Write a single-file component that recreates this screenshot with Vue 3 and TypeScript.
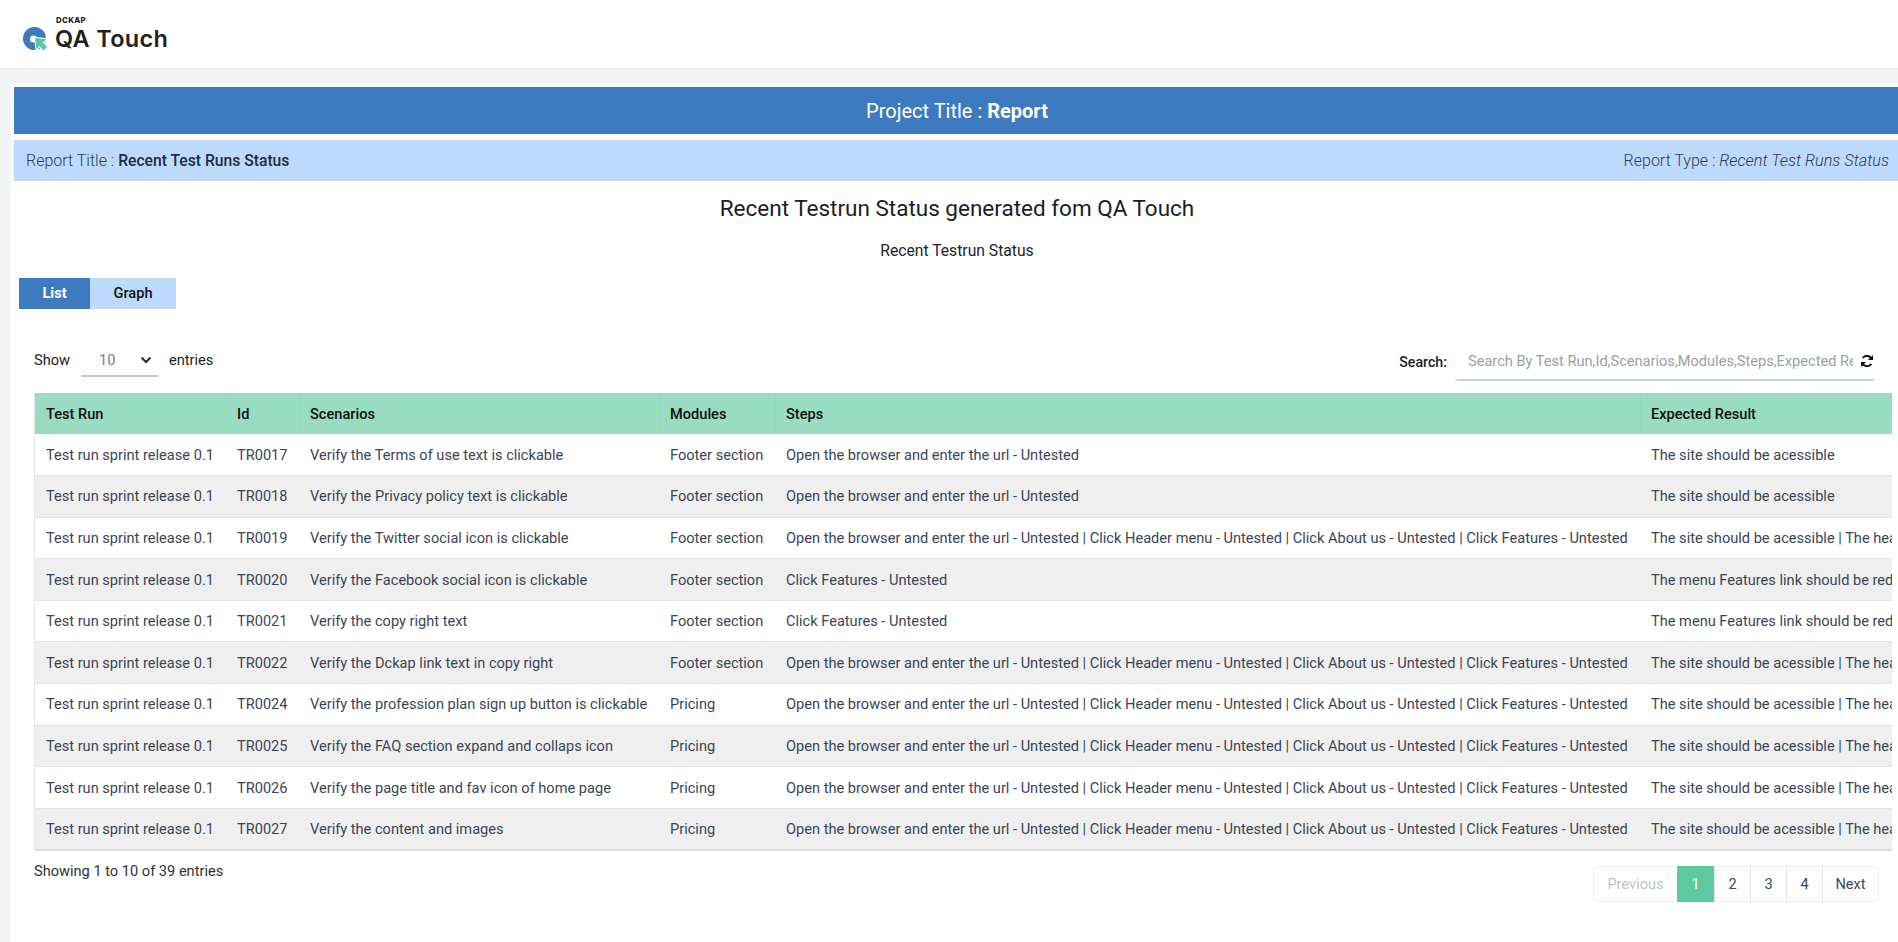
<script setup lang="ts">
interface Row { run: string; id: string; scenario: string; module: string; steps: string; expected: string }
const full = 'Open the browser and enter the url - Untested | Click Header menu - Untested | Click About us - Untested | Click Features - Untested'
const open = 'Open the browser and enter the url - Untested'
const click = 'Click Features - Untested'
const site = 'The site should be acessible'
const siteFull = 'The site should be acessible | The header menu should be displayed'
const menu = 'The menu Features link should be redirected to features page'
const run = 'Test run sprint release 0.1'
const rows: Row[] = [
  { run, id: 'TR0017', scenario: 'Verify the Terms of use text is clickable', module: 'Footer section', steps: open, expected: site },
  { run, id: 'TR0018', scenario: 'Verify the Privacy policy text is clickable', module: 'Footer section', steps: open, expected: site },
  { run, id: 'TR0019', scenario: 'Verify the Twitter social icon is clickable', module: 'Footer section', steps: full, expected: siteFull },
  { run, id: 'TR0020', scenario: 'Verify the Facebook social icon is clickable', module: 'Footer section', steps: click, expected: menu },
  { run, id: 'TR0021', scenario: 'Verify the copy right text', module: 'Footer section', steps: click, expected: menu },
  { run, id: 'TR0022', scenario: 'Verify the Dckap link text in copy right', module: 'Footer section', steps: full, expected: siteFull },
  { run, id: 'TR0024', scenario: 'Verify the profession plan sign up button is clickable', module: 'Pricing', steps: full, expected: siteFull },
  { run, id: 'TR0025', scenario: 'Verify the FAQ section expand and collaps icon', module: 'Pricing', steps: full, expected: siteFull },
  { run, id: 'TR0026', scenario: 'Verify the page title and fav icon of home page', module: 'Pricing', steps: full, expected: siteFull },
  { run, id: 'TR0027', scenario: 'Verify the content and images', module: 'Pricing', steps: full, expected: siteFull },
]
const pages = ['1', '2', '3', '4']
</script>

<template>
  <div class="page">
    <header class="top">
      <div class="logo">
        <svg class="mark" width="26" height="26" viewBox="0 0 26 26">
          <circle cx="12.500" cy="12.500" r="11.500" fill="#3d7ac0" />
          <circle cx="11.500" cy="13" r="3.500" fill="#fff" />
          <path d="M13 12l11.500 1-3.500 3.200 4 4.800-3.500 3.500-4-4.500-3 3.500z" fill="#5ec8a0" stroke="#fff" stroke-width="2" paint-order="stroke" stroke-linejoin="round" />
        </svg>
        <div class="words">
          <span class="dckap">DCKAP</span>
          <span class="qa">QA Touch</span>
        </div>
      </div>
    </header>
    <main class="card">
      <div class="project">Project Title : <b>Report</b></div>
      <div class="meta">
        <span>Report Title : <strong>Recent Test Runs Status</strong></span>
        <span>Report Type : <em>Recent Test Runs Status</em></span>
      </div>
      <h1 class="title">Recent Testrun Status generated fom QA Touch</h1>
      <p class="subtitle">Recent Testrun Status</p>
      <div class="tabs">
        <span class="tab active">List</span>
        <span class="tab">Graph</span>
      </div>
      <div class="panel">
        <div class="tools">
          <div class="show">
            <span>Show</span>
            <span class="select">10
              <svg width="12" height="8" viewBox="0 0 12 8"><path d="M1.500 1.500L6 6l4.500-4.500" fill="none" stroke="#1f2d3d" stroke-width="2" /></svg>
            </span>
            <span>entries</span>
          </div>
          <div class="search">
            <span class="search-label">Search:</span>
            <div class="search-box">
              <span class="placeholder">Search By Test Run,Id,Scenarios,Modules,Steps,Expected Result</span>
              <svg width="14" height="14" viewBox="0 0 14 14">
                <path d="M12 5.500A5.200 5.200 0 0 0 2.800 4M2 8.500A5.200 5.200 0 0 0 11.200 10" fill="none" stroke="#111" stroke-width="2" />
                <path d="M13 1v5H8zM1 13V8h5z" fill="#111" />
              </svg>
            </div>
          </div>
        </div>
        <div class="table-clip">
          <table>
            <colgroup>
              <col class="c1" /><col class="c2" /><col class="c3" /><col class="c4" /><col class="c5" /><col class="c6" />
            </colgroup>
            <thead>
              <tr>
                <th>Test Run</th><th>Id</th><th>Scenarios</th><th>Modules</th><th>Steps</th><th>Expected Result</th>
              </tr>
            </thead>
            <tbody>
              <tr v-for="r in rows" :key="r.id">
                <td>{{ r.run }}</td><td>{{ r.id }}</td><td>{{ r.scenario }}</td><td>{{ r.module }}</td><td>{{ r.steps }}</td><td>{{ r.expected }}</td>
              </tr>
            </tbody>
          </table>
        </div>
        <div class="foot">
          <span class="info">Showing 1 to 10 of 39 entries</span>
          <nav class="pager">
            <span class="pg prev">Previous</span>
            <span v-for="p in pages" :key="p" class="pg" :class="{ current: p === '1' }">{{ p }}</span>
            <span class="pg next">Next</span>
          </nav>
        </div>
      </div>
    </main>
  </div>
</template>

<style>
html, body { margin: 0; overflow: hidden; }
</style>

<style scoped>
.page {
  height: 942px;
  overflow: hidden;
  background: #f3f4f6;
  font-family: Roboto, "Liberation Sans", sans-serif;
  font-size: 14.600px;
  color: #3a4656;
}
.top {
  height: 69px;
  background: #fff;
  border-bottom: 1px solid #e6e7e9;
  box-sizing: border-box;
  padding: 16px 0 0 22px;
}
.logo { display: flex; align-items: flex-end; gap: 8px; }
.mark { margin-bottom: -1px; flex: none; }
.words { display: flex; flex-direction: column; }
.dckap { font: 800 7.800px/8px Inter, sans-serif; color: #222; letter-spacing: .35px; margin-bottom: 3px; }
.qa { font: 600 23.500px/24px Inter, sans-serif; color: #1f1f22; margin-left: -1px; letter-spacing: .3px; }
.card {
  margin: 15px 0 0 11px;
  width: 1889px;
  height: 858px;
  background: #fff;
  padding: 3px 0 0 3px;
  box-sizing: border-box;
}
.project {
  height: 47px;
  line-height: 48px;
  background: #3d7ac0;
  color: #fff;
  font-size: 20px;
  text-align: center;
}
.project b { font-weight: 700; }
.meta {
  margin-top: 6px;
  height: 41px;
  background: #bddafd;
  display: flex;
  justify-content: space-between;
  align-items: center;
  padding: 0 11px 0 12px;
  font-size: 16px;
  font-weight: 300;
  color: #2f3d50;
}
.meta strong { font-size: 15.700px; font-weight: 500; color: #1f2d3d; }
.meta em { font-size: 16.300px; color: #2d3a4a; }
.title {
  margin: 14px 0 0;
  font-size: 22.500px;
  line-height: 26px;
  font-weight: 400;
  color: #1d1d1f;
  text-align: center;
}
.subtitle {
  margin: 21px 0 0;
  text-align: center;
  line-height: 18px;
  font-size: 15.700px;
  color: #212529;
}
.tabs { display: flex; margin: 18px 0 0 5px; }
.tab {
  height: 31px;
  line-height: 31px;
  width: 86px;
  text-align: center;
  background: #bddafd;
  font-weight: 500;
  color: #111;
}
.tab.active { width: 71px; background: #3d7ac0; color: #fff; font-weight: 700; }
.panel { padding: 0 8px 0 20px; }
.tools {
  display: flex;
  justify-content: space-between;
  margin-top: 34px;
  height: 50px;
  padding-right: 17px;
}
.show { display: flex; align-items: flex-start; gap: 11px; color: #222; line-height: 30px; margin-top: 2px; }
.select {
  width: 77px;
  height: 32px;
  border-bottom: 2px solid #bcc9d8;
  display: flex;
  justify-content: space-between;
  align-items: flex-start;
  box-sizing: border-box;
  padding: 0 6px 0 18px;
  color: #75808c;
}
.select svg { flex: none; margin-top: 11px; }
.search { display: flex; gap: 8px; align-items: flex-start; }
.search-label { font-weight: 500; color: #222; line-height: 16px; margin-top: 11px; font-size: 14.200px; }
.search-box {
  width: 420px;
  height: 38px;
  border-bottom: 2px solid #c3d0dd;
  border-radius: 0 0 4px 4px;
  box-sizing: border-box;
  display: flex;
  align-items: center;
  justify-content: space-between;
  padding: 0 1px 0 13px;
}
.placeholder {
  width: 385px;
  overflow: hidden;
  white-space: nowrap;
  color: #9aa0a6;
}
.table-clip { overflow: hidden; border-left: 1px solid #e8e8e8; }
table { border-collapse: collapse; table-layout: fixed; width: 2400px; }
.c1 { width: 191px; } .c2 { width: 73px; } .c3 { width: 360px; } .c4 { width: 116px; } .c5 { width: 865px; } .c6 { width: 795px; }
th {
  height: 41px;
  box-sizing: border-box;
  background: #9adcc2;
  text-align: left;
  padding: 0 11px 0 10.500px;
  font-weight: 500;
  color: #111;
  border-left: 1px solid #94d8bd;
  white-space: nowrap;
}
th:first-child { border-left: 0; padding-left: 11px; }
td {
  height: 41.600px;
  padding: 0 11px;
  box-sizing: border-box;
  white-space: nowrap;
  overflow: hidden;
  color: #3a4656;
  border-bottom: 1px solid #e4e4e4;
}
tbody tr:nth-child(even) td { background: #efefef; }
tbody tr:last-child td { border-bottom: 2px solid #dcdcdc; }
.foot { display: flex; justify-content: space-between; align-items: flex-start; padding: 10px 13px 0 0; }
.info { color: #2f3337; line-height: 20px; }
.pager {
  display: flex;
  margin-top: 5px;
  height: 36px;
  border: 1px solid #eceef0;
  border-radius: 4px;
  box-sizing: border-box;
}
.pg {
  width: 36px;
  box-sizing: border-box;
  height: 36px;
  margin-top: -1px;
  line-height: 36px;
  text-align: center;
  border-left: 1px solid #e3e6e9;
  color: #34495e;
}
.pg.prev { width: 83px; border-left: 0; color: #bfc3c7; }
.pg.next { width: 56px; }
.pg.current { width: 37px; background: #5ec8a0; color: #fff; border-left: 0; }
</style>
